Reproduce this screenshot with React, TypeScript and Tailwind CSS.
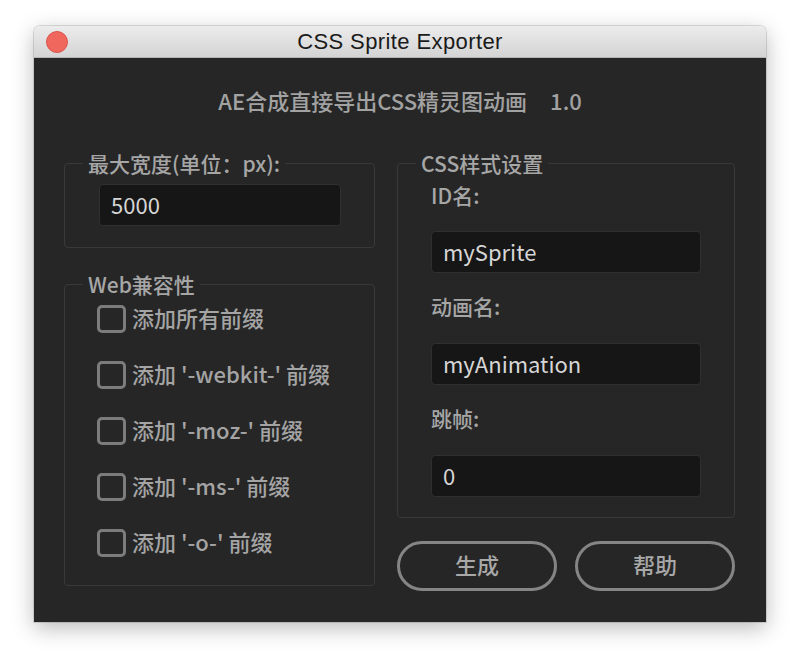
import { useState } from 'react';

const cjk = { fontFamily: '"Noto Sans CJK SC", "Noto Sans", sans-serif' };

const prefixes = [
  '添加所有前缀',
  "添加 '-webkit-' 前缀",
  "添加 '-moz-' 前缀",
  "添加 '-ms-' 前缀",
  "添加 '-o-' 前缀",
];

function Checkbox({ label }: { label: string }) {
  const [checked, setChecked] = useState(false);
  return (
    <label className="flex items-center gap-[6px] h-[28px] cursor-pointer">
      <span
        onClick={() => setChecked(!checked)}
        className="w-[29px] h-[28px] rounded-[5px] border-[3px] border-[#7c7c7c] bg-[#262626] flex items-center justify-center text-[#c8c8c8] text-sm"
      >
        {checked ? '✓' : ''}
      </span>
      <span className="pb-[4px] text-[22px] leading-[28px] text-[#a4a4a4] font-medium">{label}</span>
    </label>
  );
}

function TextInput({ value, width }: { value: string; width: string }) {
  return (
    <input
      defaultValue={value}
      className={`${width} h-[42px] rounded-[4px] bg-[#161616] border border-[#2f2f2f] px-[11px] pb-[3px] text-[22px] text-[#d6d6d6] outline-none`}
      style={cjk}
    />
  );
}

function Legend({ children }: { children: string }) {
  return (
    <legend className="ml-[18px] px-[5px] text-[21px] leading-[24px] font-medium text-[#a6a6a6]">
      {children}
    </legend>
  );
}

export default function App() {
  return (
    <div className="min-h-screen bg-white pt-[26px] pl-[34px]" style={cjk}>
      <div className="w-[732px] h-[596px] rounded-t-[6px] overflow-hidden shadow-[0_6px_22px_rgba(0,0,0,0.28),0_0_0_1px_rgba(0,0,0,0.12)] flex flex-col">
        {/* Title bar */}
        <div className="h-[32px] shrink-0 flex items-center relative bg-gradient-to-b from-[#ececec] to-[#d4d4d4] border-b border-[#b4b4b4]">
          <span className="ml-[12px] w-[22px] h-[22px] rounded-full bg-[#f0675d] border border-[#d9534b]" />
          <span
            className="absolute inset-x-0 text-center text-[22px] tracking-[0.4px] leading-[32px] text-[#1a1a1a]"
            style={{ fontFamily: '"Liberation Sans", Arial, sans-serif' }}
          >
            CSS Sprite Exporter
          </span>
        </div>

        {/* Body */}
        <div className="flex-1 bg-[#262626] pt-[28px]">
          <p className="text-center text-[22px] leading-[28px] font-medium text-[#a2a2a2]">
            AE合成直接导出CSS精灵图动画<span className="ml-[23px]">1.0</span>
          </p>

          <div className="flex gap-[22px] pl-[30px] mt-[37px]">
            {/* Left column */}
            <div className="w-[311px] flex flex-col">
              <fieldset className="border border-[#393939] rounded-[4px]">
                <Legend>最大宽度(单位：px):</Legend>
                <div className="pl-[34px] pt-[9px] pb-[21px]">
                  <TextInput value="5000" width="w-[242px]" />
                </div>
              </fieldset>

              <fieldset className="mt-[24px] border border-[#393939] rounded-[4px]">
                <Legend>Web兼容性</Legend>
                <div className="pl-[32px] pt-[9px] pb-[28px] flex flex-col gap-[28px]">
                  {prefixes.map((p) => (
                    <Checkbox key={p} label={p} />
                  ))}
                </div>
              </fieldset>
            </div>

            {/* Right column */}
            <div className="w-[338px] flex flex-col">
              <fieldset className="border border-[#393939] rounded-[4px]">
                <Legend>CSS样式设置</Legend>
                <div className="pl-[33px] pt-[8px] pb-[20px] flex flex-col">
                  <span className="text-[21px] leading-[24px] font-medium text-[#a6a6a6]">ID名:</span>
                  <div className="mt-[24px]">
                    <TextInput value="mySprite" width="w-[270px]" />
                  </div>
                  <span className="mt-[21px] text-[21px] leading-[24px] font-medium text-[#a6a6a6]">动画名:</span>
                  <div className="mt-[25px]">
                    <TextInput value="myAnimation" width="w-[270px]" />
                  </div>
                  <span className="mt-[21px] text-[21px] leading-[24px] font-medium text-[#a6a6a6]">跳帧:</span>
                  <div className="mt-[25px]">
                    <TextInput value="0" width="w-[270px]" />
                  </div>
                </div>
              </fieldset>

              <div className="mt-[23px] flex justify-between">
                <button className="w-[160px] h-[50px] pb-[3px] rounded-full border-[3px] border-[#858585] text-[22px] font-medium text-[#a8a8a8]">
                  生成
                </button>
                <button className="w-[160px] h-[50px] pb-[3px] rounded-full border-[3px] border-[#858585] text-[22px] font-medium text-[#a8a8a8]">
                  帮助
                </button>
              </div>
            </div>
          </div>
        </div>
      </div>
    </div>
  );
}
